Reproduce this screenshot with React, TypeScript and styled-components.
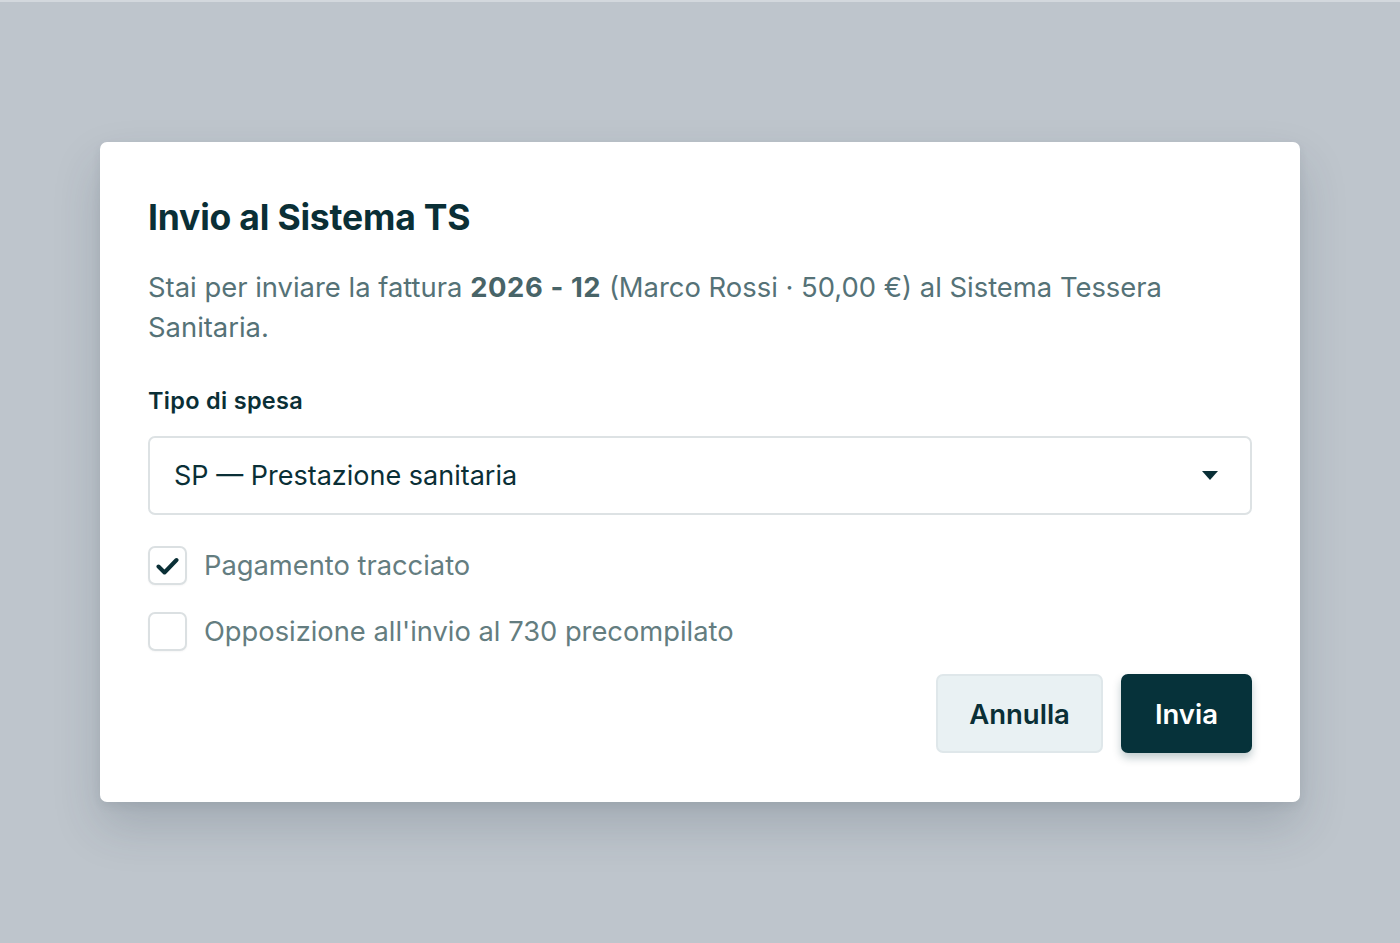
import { useState } from "react";
import styled, { createGlobalStyle } from "styled-components";

const GlobalStyle = createGlobalStyle`
  html, body {
    margin: 0;
    padding: 0;
    background: #bec5cc;
    font-family: Inter, "Noto Sans", "Liberation Sans", sans-serif;
  }
  * {
    box-sizing: border-box;
  }
`;

const Page = styled.div`
  min-height: 943px;
  border-top: 2px solid #d3d8dd;
  display: flex;
  justify-content: center;
  align-items: flex-start;
  padding-top: 140px;
`;

const Dialog = styled.div`
  width: 1200px;
  background: #ffffff;
  border-radius: 7px;
  padding: 52px 48px 49px;
  box-shadow: 0 24px 48px rgba(40, 55, 70, 0.18), 0 4px 10px rgba(40, 55, 70, 0.08);
  display: flex;
  flex-direction: column;
`;

const Title = styled.h1`
  margin: 0;
  font-size: 35.5px;
  line-height: 48px;
  font-weight: 700;
  color: #0a2f36;
  letter-spacing: -0.2px;
`;

const Intro = styled.p`
  margin: 25px 0 0;
  font-size: 27.4px;
  line-height: 40px;
  color: #557277;
  max-width: 1040px;

  strong {
    font-weight: 700;
    letter-spacing: 0.6px;
    color: #486468;
  }
`;

const Label = styled.label`
  margin-top: 38px;
  font-size: 23.5px;
  line-height: 32px;
  font-weight: 600;
  letter-spacing: 0.3px;
  color: #0a2f36;
`;

const SelectBox = styled.div`
  margin-top: 19px;
  height: 79px;
  border: 2px solid #dde2e4;
  border-radius: 7px;
  display: flex;
  align-items: center;
  justify-content: space-between;
  padding: 0 32px 0 24px;
  font-size: 27px;
  color: #0a2f36;
`;

const Options = styled.div`
  margin-top: 31px;
  display: flex;
  flex-direction: column;
  gap: 27px;
`;

const CheckRow = styled.label`
  display: flex;
  align-items: center;
  gap: 17px;
  font-size: 27.3px;
  line-height: 39px;
  color: #647d80;
  cursor: pointer;
`;

const Box = styled.span<{ $checked: boolean }>`
  width: 39px;
  height: 39px;
  border: 2px solid #dbe0e2;
  border-radius: 7px;
  background: #ffffff;
  display: flex;
  align-items: center;
  justify-content: center;
  flex-shrink: 0;
  box-shadow: 0 1px 2px rgba(0, 0, 0, 0.04);

  svg {
    visibility: ${(p) => (p.$checked ? "visible" : "hidden")};
  }
`;

const Actions = styled.div`
  margin-top: 23px;
  display: flex;
  justify-content: flex-end;
  gap: 18px;
`;

const Button = styled.button<{ $primary?: boolean }>`
  height: 79px;
  padding: 0 ${(p) => (p.$primary ? "32px" : "31px")};
  border-radius: 7px;
  font-family: inherit;
  font-size: 27.5px;
  font-weight: 600;
  cursor: pointer;
  border: 2px solid ${(p) => (p.$primary ? "#06323a" : "#dfe7ea")};
  background: ${(p) => (p.$primary ? "#06323a" : "#e9f1f3")};
  color: ${(p) => (p.$primary ? "#ffffff" : "#0a2f36")};
  box-shadow: ${(p) =>
    p.$primary ? "0 5px 8px rgba(6, 50, 58, 0.25)" : "none"};
`;

function Check({ checked, label, onToggle }: { checked: boolean; label: string; onToggle: () => void }) {
  return (
    <CheckRow onClick={onToggle}>
      <Box $checked={checked}>
        <svg width="24" height="20" viewBox="0 0 24 20">
          <path d="M2.5 10.5l6 6L20.5 4" fill="none" stroke="#0a2f36" strokeWidth="4" strokeLinecap="round" strokeLinejoin="round" />
        </svg>
      </Box>
      {label}
    </CheckRow>
  );
}

export default function App() {
  const [traced, setTraced] = useState(true);
  const [opposed, setOpposed] = useState(false);

  return (
    <>
      <GlobalStyle />
      <Page>
        <Dialog>
          <Title>Invio al Sistema TS</Title>
          <Intro>
            Stai per inviare la fattura <strong>2026 - 12</strong> (Marco Rossi · 50,00 €) al Sistema Tessera
            Sanitaria.
          </Intro>
          <Label>Tipo di spesa</Label>
          <SelectBox>
            <span>SP — Prestazione sanitaria</span>
            <svg width="16" height="9" viewBox="0 0 16 9">
              <path d="M0 0h16L8 9z" fill="#0a2f36" />
            </svg>
          </SelectBox>
          <Options>
            <Check checked={traced} label="Pagamento tracciato" onToggle={() => setTraced(!traced)} />
            <Check checked={opposed} label="Opposizione all'invio al 730 precompilato" onToggle={() => setOpposed(!opposed)} />
          </Options>
          <Actions>
            <Button>Annulla</Button>
            <Button $primary>Invia</Button>
          </Actions>
        </Dialog>
      </Page>
    </>
  );
}
